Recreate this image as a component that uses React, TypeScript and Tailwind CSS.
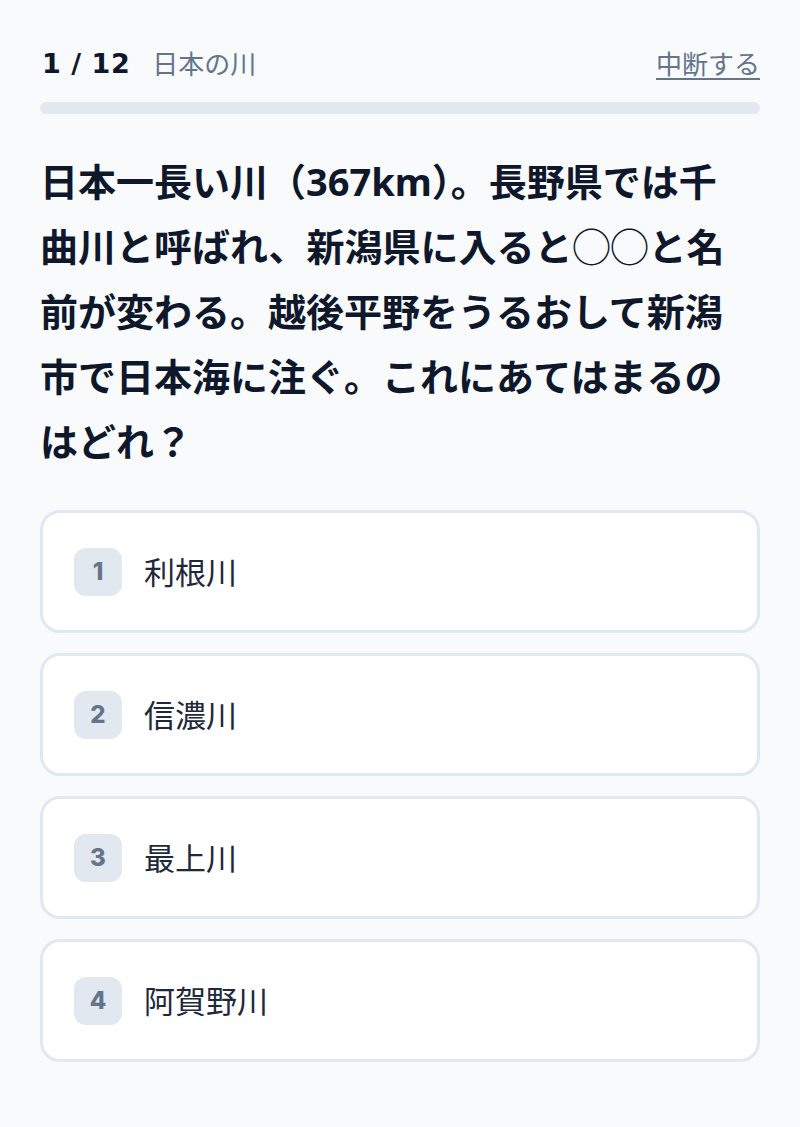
import React from "react";

const options = ["利根川", "信濃川", "最上川", "阿賀野川"];

export default function App() {
  return (
    <div
      className="min-h-[1127px] w-full bg-[#f8fafc] px-10 pt-10 pb-10"
      style={{ fontFamily: '"Noto Sans", "Noto Sans CJK JP", sans-serif' }}
    >
      <div className="flex h-12 items-center justify-between">
        <div className="flex items-center gap-[22px]">
          <span
            className="ml-[2px] text-[27px] font-bold tracking-[0.02em] text-[#0f172a]"
            style={{ fontFamily: '"DejaVu Sans", Inter, sans-serif' }}
          >
            1 / 12
          </span>
          <span className="text-[26px] text-[#64748b]">日本の川</span>
        </div>
        <span className="text-[26px] text-[#64748b] underline underline-offset-[4px] decoration-[2px]">
          中断する
        </span>
      </div>
      <div className="mt-[14px] h-3 w-full rounded-full bg-[#e2e8f0]" />
      <p className="mt-[35px] max-w-[705px] text-[38px] font-bold leading-[65px] text-[#0f172a]">
        日本一長い川（367km）。長野県では千曲川と呼ばれ、新潟県に入ると◯◯と名前が変わる。越後平野をうるおして新潟市で日本海に注ぐ。これにあてはまるのはどれ？
      </p>
      <div className="mt-[36px] flex flex-col gap-5">
        {options.map((o, i) => (
          <div
            key={o}
            className="flex items-center gap-[22px] rounded-[20px] border-[3px] border-[#e2e8f0] bg-white px-[31px] py-[34.5px]"
          >
            <div
              className="flex h-12 w-12 items-center justify-center rounded-xl bg-[#e2e8f0] text-[24px] font-extrabold text-[#64748b]"
              style={{ fontFamily: 'Inter, "Noto Sans", sans-serif' }}
            >
              {i + 1}
            </div>
            <span className="text-[31px] leading-[48px] text-[#1e293b]">{o}</span>
          </div>
        ))}
      </div>
    </div>
  );
}
